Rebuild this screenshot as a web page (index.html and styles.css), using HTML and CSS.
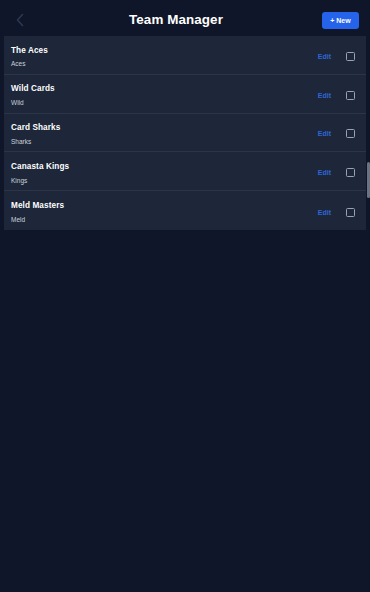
FILE: index.html
```html
<!DOCTYPE html>
<html>
<head>
<meta charset="utf-8">
<link rel="stylesheet" href="styles.css">
</head>
<body>
<div class="app">
  <header class="header">
    <span class="back">
      <svg width="10" height="14" viewBox="0 0 10 14"><path d="M7.5 1.5 L2.5 7 L7.5 12.5" fill="none" stroke="#2b3850" stroke-width="1.6" stroke-linecap="round" stroke-linejoin="round"/></svg>
    </span>
    <h1 class="title">Team Manager</h1>
    <button class="new-btn">+ New</button>
  </header>
  <ul class="list">
    <li class="row"><div class="info"><div class="name">The Aces</div><div class="sub">Aces</div></div><span class="edit">Edit</span><span class="check"></span></li>
    <li class="row"><div class="info"><div class="name">Wild Cards</div><div class="sub">Wild</div></div><span class="edit">Edit</span><span class="check"></span></li>
    <li class="row"><div class="info"><div class="name">Card Sharks</div><div class="sub">Sharks</div></div><span class="edit">Edit</span><span class="check"></span></li>
    <li class="row"><div class="info"><div class="name">Canasta Kings</div><div class="sub">Kings</div></div><span class="edit">Edit</span><span class="check"></span></li>
    <li class="row"><div class="info"><div class="name">Meld Masters</div><div class="sub">Meld</div></div><span class="edit">Edit</span><span class="check"></span></li>
  </ul>
  <div class="scrollbar"></div>
</div>
</body>
</html>
```
FILE: styles.css
```css
* { box-sizing: border-box; }
html, body { margin: 0; padding: 0; }
body {
  background: #0f1629;
  font-family: "Liberation Sans", Arial, sans-serif;
  color: #fff;
  width: 370px;
  height: 592px;
  overflow: hidden;
}
.app { position: relative; height: 592px; }
.header {
  height: 36px;
  display: flex;
  align-items: center;
  padding: 0 11px 0 15px;
}
.back { display: flex; width: 10px; height: 14px; margin-top: 4px; }
.title {
  flex: 1;
  margin: 4px 0 0;
  padding-left: 5px;
  line-height: 20px;
  text-align: center;
  font-size: 13.4px;
  font-weight: 700;
  letter-spacing: 0.1px;
}
.new-btn {
  background: #2563eb;
  color: #fff;
  border: none;
  border-radius: 3px;
  font-family: inherit;
  font-size: 7px;
  font-weight: 700;
  width: 37px;
  height: 17px;
  padding: 0;
  margin-top: 4px;
}
.list {
  list-style: none;
  margin: 0 4px;
  padding: 0;
  background: #1d2739;
}
.row {
  height: 38.8px;
  display: flex;
  align-items: center;
  padding: 2px 11px 0 7px;
  border-bottom: 1px solid #2a3547;
}
.row:last-child { border-bottom: none; }
.info { flex: 1; display: flex; flex-direction: column; gap: 3.5px; margin-top: 3px; }
.name { font-size: 8.2px; font-weight: 700; color: #fff; line-height: 10px; letter-spacing: 0.1px; }
.sub { font-size: 6.5px; color: #cbd2dc; line-height: 10px; }
.edit {
  color: #2f66d6;
  font-size: 7px;
  font-weight: 700;
  margin-right: 15px;
  margin-top: 1px;
}
.check {
  width: 9px;
  height: 9px;
  border: 1.3px solid #9aa3b0;
  border-radius: 1.5px;
  margin-top: 1px;
}
.scrollbar {
  position: absolute;
  right: 0;
  top: 162px;
  width: 3px;
  height: 36px;
  background: #6b7280;
  border-radius: 2px;
}
```
